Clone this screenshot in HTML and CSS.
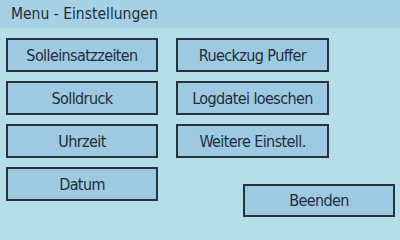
FILE: index.html
```html
<!DOCTYPE html>
<html lang="de">
<head>
<meta charset="utf-8">
<title>Menu - Einstellungen</title>
<link rel="stylesheet" href="styles.css">
</head>
<body>
<div class="screen">
  <header class="title">Menu - Einstellungen</header>
  <main class="menu">
    <button class="btn left">Solleinsatzzeiten</button>
    <button class="btn right">Rueckzug Puffer</button>
    <button class="btn left">Solldruck</button>
    <button class="btn right">Logdatei loeschen</button>
    <button class="btn left">Uhrzeit</button>
    <button class="btn right">Weitere Einstell.</button>
    <button class="btn left">Datum</button>
    <button class="btn exit">Beenden</button>
  </main>
</div>
</body>
</html>
```
FILE: styles.css
```css
html, body {
  margin: 0;
  padding: 0;
  background: #b5dee8;
}
.screen {
  width: 400px;
  height: 224px;
  overflow: hidden;
  background: #b5dee8;
  font-family: "DejaVu Sans Condensed", "DejaVu Sans", sans-serif;
  color: #1d2c3a;
}
.title {
  height: 28px;
  box-sizing: border-box;
  padding-left: 11px;
  display: flex;
  align-items: center;
  background: #a6d1e4;
  font-size: 15.5px;
}
.menu {
  display: grid;
  grid-template-columns: 152px 153px 1fr;
  grid-auto-rows: 34px;
  column-gap: 18px;
  row-gap: 9px;
  padding: 10px 5px 0 6px;
}
.btn {
  box-sizing: border-box;
  margin: 0;
  padding: 0;
  border: 2px solid #25323f;
  background: #9ecae1;
  color: #1d2c3a;
  font-family: inherit;
  font-size: 16px;
  letter-spacing: -0.6px;
  display: flex;
  align-items: center;
  justify-content: center;
}
.left {
  grid-column: 1;
}
.right {
  grid-column: 2;
}
.exit {
  grid-column: 2 / 4;
  grid-row: 4;
  justify-self: end;
  width: 152px;
  height: 33px;
  margin-top: 17px;
}
```
